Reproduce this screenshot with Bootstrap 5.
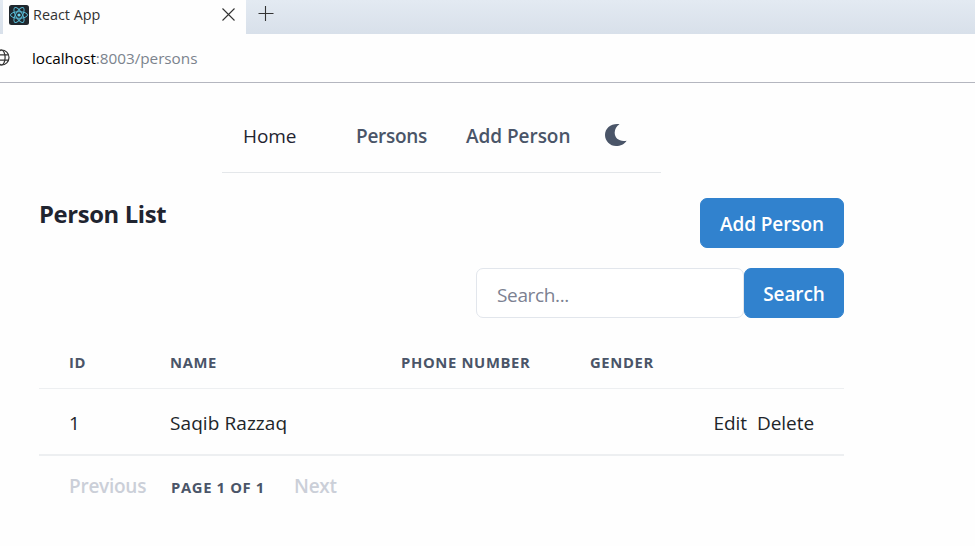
<!DOCTYPE html>
<html lang="en">
<head>
<meta charset="utf-8">
<meta name="viewport" content="width=device-width, initial-scale=1">
<title>React App</title>
<link href="https://cdn.jsdelivr.net/npm/bootstrap@5.3.0/dist/css/bootstrap.min.css" rel="stylesheet">
<style>
body { font-family: "Segoe UI", "Open Sans", "Noto Sans", sans-serif; font-size: 19px; letter-spacing: -.06px; line-height: 30px; color: #1f2430; background: #fefefe; height: 546px; overflow: hidden; white-space: nowrap; }
.tabstrip { height: 34px; background: linear-gradient(#e3eaf2, #d8e0ea); }
.tab-edge { width: 3px; }
.browser-tab { width: 243px; background: #fefefe; padding: 0 10px 5px 6px; }
.tab-title { font-size: 14.4px; line-height: 22px; margin-left: 4px; color: #333; letter-spacing: 0; }
.new-tab { padding: 5px 0 0 12px; }
.address { height: 49px; border-bottom: 1px solid #b4b6bf; font-size: 15.3px; letter-spacing: -.03px; color: #7b838d; }
.address svg { margin-left: -7px; margin-right: 22px; margin-top: -2px; }
.site-nav { width: 439px; height: 90px; margin-left: 222px; padding: 16px 0 0 21px; border-bottom: 1px solid #e4e7ea; }
.semi { font-weight: 600; color: #4a5568; }
.n-home { width: 113px; }
.n-persons { width: 110px; letter-spacing: -.3px; }
.n-add { width: 139px; letter-spacing: -.05px; }
.page { width: 805px; margin-left: 39px; padding-top: 25px; }
.page h1 { font-size: 23.8px; line-height: 32px; font-weight: 700; margin: 0; letter-spacing: -.35px; }
.blue { --bs-btn-bg: #3182ce; --bs-btn-border-color: #3182ce; --bs-btn-color: #fff; --bs-btn-padding-x: 0; --bs-btn-padding-y: 0; --bs-btn-border-radius: 7px; --bs-btn-font-size: 19px; --bs-btn-font-weight: 600; --bs-btn-line-height: 50px; height: 50px; letter-spacing: -.08px; }
.b-add { width: 144px; }
.b-search { width: 100px; }
.find { width: 268px; height: 50px; border: 1px solid #e2e6ec; border-radius: 7px; font-size: 19px; letter-spacing: -.35px; padding: 3px 20px 0; }
.find::placeholder { color: #7c8191; }
.people { margin-top: 19px; }
.people th, .pager strong { font-size: 14.8px; line-height: 20px; font-weight: 700; letter-spacing: .64px; color: #4a5568; }
.people > :not(caption) > * > * { padding: 0 0 0 30px; border-color: #edeff1; background: transparent; color: inherit; }
.people thead th { height: 51px; padding-top: 0; color: #4a5568 !important; }
.people tbody td { height: 67px; padding-top: 3px; border-bottom-width: 2px; }
.people .full-name { letter-spacing: .08px; }
.people .actions { padding-right: 30px; }
.edit { margin-right: 10px; }
.pager { padding: 15px 0 0 30px; }
.pager .off { color: #cbcfd8; font-weight: 600; letter-spacing: -.25px; }
.p-prev { width: 102px; }
.pager .p-count { width: 123px; padding-top: 6px; }
</style>
</head>
<body>
<header>
  <div class="tabstrip d-flex">
    <div class="tab-edge"></div>
    <div class="browser-tab d-flex align-items-center">
      <svg width="20" height="20" viewBox="0 0 20 20" fill="none"><rect width="20" height="20" rx="2.5" fill="#20272d"/><g stroke="#57b9d3" stroke-width="1"><ellipse cx="10" cy="10" rx="8.5" ry="3.3"/><ellipse cx="10" cy="10" rx="8.5" ry="3.3" transform="rotate(60 10 10)"/><ellipse cx="10" cy="10" rx="8.5" ry="3.3" transform="rotate(120 10 10)"/></g><circle cx="10" cy="10" r="1.6" fill="#6cd5ef"/></svg>
      <span class="tab-title">React App</span>
      <svg class="ms-auto" width="15" height="15" viewBox="0 0 15 15" stroke="#333" stroke-width="1.1"><path d="M1.5 1.5 13.5 13.5M13.5 1.5 1.5 13.5"/></svg>
    </div>
    <div class="new-tab"><svg class="d-block" width="16" height="16" viewBox="0 0 16 16" stroke="#333" stroke-width="1.1"><path d="M.5 8.5h15M7.5 1v15"/></svg></div>
  </div>
  <div class="address d-flex align-items-center">
    <svg width="17" height="17" viewBox="0 0 17 17" fill="none" stroke="#333" stroke-width="1.2"><circle cx="8.5" cy="8.5" r="7.5"/><ellipse cx="8.5" cy="8.5" rx="3.6" ry="7.5"/><path d="M1.7 5.8h13.6M1.7 11.2h13.6"/></svg>
    <div><span class="text-black">localhost</span>:8003/persons</div>
  </div>
</header>
<nav class="site-nav d-flex align-items-center">
  <span class="n-home">Home</span>
  <span class="n-persons semi">Persons</span>
  <span class="n-add semi">Add Person</span>
  <svg class="moon" width="22" height="24" viewBox="0 0 22 24" fill="#4a5568"><path d="M14.500.2C6.500-.9 0 4 0 11c0 6 5 11 11 11 4.500 0 8.500-2 10.600-5.300C14.500 18 9.500 14.500 9.700 8.500 9.800 5 11.600 2 14.500.2Z"/></svg>
</nav>
<main class="page">
  <div class="d-flex justify-content-between align-items-start">
    <h1>Person List</h1>
    <button class="btn blue b-add" type="button">Add Person</button>
  </div>
  <form class="d-flex justify-content-end mt-3 pt-1">
    <input class="form-control find flex-grow-0" type="text" placeholder="Search..." aria-label="Search">
    <button class="btn blue b-search" type="button">Search</button>
  </form>
  <table class="table people mb-0">
    <colgroup><col width="101"><col width="231"><col width="189"><col width="90"><col></colgroup>
    <thead class="align-middle"><tr><th>ID</th><th>NAME</th><th>PHONE NUMBER</th><th>GENDER</th><th></th></tr></thead>
    <tbody><tr class="align-middle"><td>1</td><td class="full-name">Saqib Razzaq</td><td></td><td></td><td class="actions text-end"><span class="edit">Edit</span><span>Delete</span></td></tr></tbody>
  </table>
  <div class="pager d-flex">
    <span class="off p-prev">Previous</span>
    <strong class="p-count">PAGE 1 OF 1</strong>
    <span class="off">Next</span>
  </div>
</main>
<script src="https://cdn.jsdelivr.net/npm/bootstrap@5.3.0/dist/js/bootstrap.bundle.min.js"></script>
</body>
</html>
